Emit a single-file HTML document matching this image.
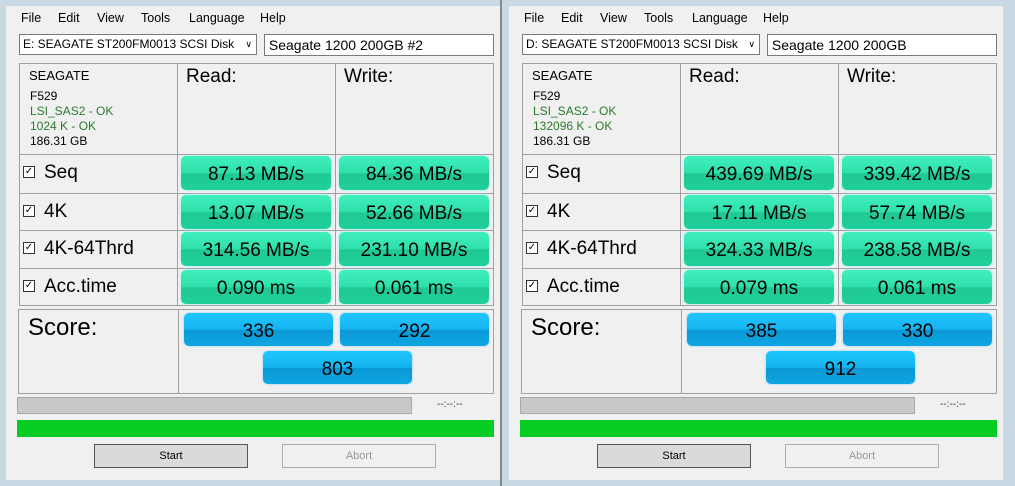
<!DOCTYPE html><html><head><style>
body{margin:0;width:1015px;height:486px;background:#c9d9e3;position:relative;overflow:hidden;font-family:"Liberation Sans",sans-serif}
.p{position:absolute;top:0;width:500px;height:486px}
.in{position:absolute;left:6px;top:6px;width:494px;height:474px;background:#f0f0f0}
.a{position:absolute}
.menu{top:11px;font-size:12.5px}
.cell{position:absolute;border:1px solid #a0a0a0;box-sizing:border-box}
.g{position:absolute;height:34px;border-radius:5px;background:linear-gradient(#3ff0bd 0%,#2fe0ad 50%,#20c892 52%,#1fd09a 100%);box-shadow:0 0 2px #8ee;text-align:center;font-size:19px;line-height:38px;color:#000}
.b{position:absolute;height:33px;border-radius:5px;background:linear-gradient(#20c6ff 0%,#14b4ef 50%,#0a98d6 52%,#0ea6e2 100%);box-shadow:0 0 2px #8cf;text-align:center;font-size:19px;line-height:38px}
.lbl{position:absolute;font-size:19px;left:44px}
.chk{position:absolute;left:23px;width:10px;height:10px;border:1px solid #333;background:#fff;font-size:10px;line-height:10px;text-align:center}
.btn{position:absolute;height:22px;top:444px;width:152px;border:1px solid #adadad;text-align:center;font-size:11px;line-height:22px}
.combo{position:absolute;left:19px;top:34px;width:236px;height:19px;border:1px solid #7a7a7a;background:#fff;font-size:12px;line-height:19px}
.combo span.t{position:absolute;left:3px;top:0;width:215px;overflow:hidden;white-space:nowrap}
.combo span.ar{position:absolute;right:4px;top:0;font-size:9px}
</style></head><body>
<div class="p" style="left:0"><div class="in"></div>
<div class="a menu" style="left:21px">File</div><div class="a menu" style="left:58px">Edit</div><div class="a menu" style="left:97px">View</div><div class="a menu" style="left:141px">Tools</div><div class="a menu" style="left:189px">Language</div><div class="a menu" style="left:260px">Help</div>
<div class="combo"><span class="t">E: SEAGATE ST200FM0013 SCSI Disk Device</span><span class="ar">&#x2228;</span></div>
<div class="a" style="left:264px;top:34px;width:228px;height:20px;border:1px solid #7a7a7a;background:#fff;font-size:14px;line-height:21px">&nbsp;Seagate 1200 200GB #2</div>
<div class="cell" style="left:19px;top:63px;width:159px;height:92px"></div><div class="cell" style="left:177px;top:63px;width:159px;height:92px"></div><div class="cell" style="left:335px;top:63px;width:159px;height:92px"></div>
<div class="a" style="left:29px;top:68px;font-size:13px">SEAGATE</div>
<div class="a" style="left:30px;top:89px;font-size:12px;line-height:15px">F529<br><span style="color:#2a7a2a">LSI_SAS2 - OK<br>1024 K - OK</span><br>186.31 GB</div>
<div class="a" style="left:186px;top:66px;font-size:19px">Read:</div><div class="a" style="left:344px;top:66px;font-size:19px">Write:</div>
<div class="cell" style="left:19px;top:154px;width:159px;height:40px"></div><div class="cell" style="left:177px;top:154px;width:159px;height:40px"></div><div class="cell" style="left:335px;top:154px;width:159px;height:40px"></div>
<div class="cell" style="left:19px;top:193px;width:159px;height:38px"></div><div class="cell" style="left:177px;top:193px;width:159px;height:38px"></div><div class="cell" style="left:335px;top:193px;width:159px;height:38px"></div>
<div class="cell" style="left:19px;top:230px;width:159px;height:39px"></div><div class="cell" style="left:177px;top:230px;width:159px;height:39px"></div><div class="cell" style="left:335px;top:230px;width:159px;height:39px"></div>
<div class="cell" style="left:19px;top:268px;width:159px;height:38px"></div><div class="cell" style="left:177px;top:268px;width:159px;height:38px"></div><div class="cell" style="left:335px;top:268px;width:159px;height:38px"></div>
<div class="cell" style="left:18px;top:309px;width:161px;height:85px"></div><div class="cell" style="left:178px;top:309px;width:316px;height:85px"></div>
<div class="chk" style="top:166px">&#10003;</div><div class="lbl" style="top:162px">Seq</div>
<div class="chk" style="top:205px">&#10003;</div><div class="lbl" style="top:201px">4K</div>
<div class="chk" style="top:242px">&#10003;</div><div class="lbl" style="top:238px">4K-64Thrd</div>
<div class="chk" style="top:280px">&#10003;</div><div class="lbl" style="top:276px">Acc.time</div>
<div class="a" style="left:28px;top:314px;font-size:24px">Score:</div>
<div class="g" style="left:181px;top:156px;width:150px">87.13 MB/s</div><div class="g" style="left:339px;top:156px;width:150px">84.36 MB/s</div>
<div class="g" style="left:181px;top:195px;width:150px">13.07 MB/s</div><div class="g" style="left:339px;top:195px;width:150px">52.66 MB/s</div>
<div class="g" style="left:181px;top:232px;width:150px">314.56 MB/s</div><div class="g" style="left:339px;top:232px;width:150px">231.10 MB/s</div>
<div class="g" style="left:181px;top:270px;width:150px">0.090 ms</div><div class="g" style="left:339px;top:270px;width:150px">0.061 ms</div>
<div class="b" style="left:184px;top:313px;width:149px">336</div><div class="b" style="left:340px;top:313px;width:149px">292</div>
<div class="b" style="left:263px;top:351px;width:149px">803</div>
<div class="a" style="left:17px;top:397px;width:393px;height:15px;background:#c8c8c8;border:1px solid #a8a8a8"></div>
<div class="a" style="left:437px;top:399px;font-size:10px;color:#333">--:--:--</div>
<div class="a" style="left:17px;top:420px;width:477px;height:17px;background:#06cd24"></div>
<div class="btn" style="left:94px;background:#dadada;border-color:#555">Start</div>
<div class="btn" style="left:282px;background:#f0f0f0;color:#999">Abort</div>
</div>
<div style="position:absolute;left:500px;top:0;width:2px;height:486px;background:#7f8a93"></div>
<div class="p" style="left:503px"><div class="in"></div>
<div class="a menu" style="left:21px">File</div><div class="a menu" style="left:58px">Edit</div><div class="a menu" style="left:97px">View</div><div class="a menu" style="left:141px">Tools</div><div class="a menu" style="left:189px">Language</div><div class="a menu" style="left:260px">Help</div>
<div class="combo"><span class="t">D: SEAGATE ST200FM0013 SCSI Disk Device</span><span class="ar">&#x2228;</span></div>
<div class="a" style="left:264px;top:34px;width:228px;height:20px;border:1px solid #7a7a7a;background:#fff;font-size:14px;line-height:21px">&nbsp;Seagate 1200 200GB</div>
<div class="cell" style="left:19px;top:63px;width:159px;height:92px"></div><div class="cell" style="left:177px;top:63px;width:159px;height:92px"></div><div class="cell" style="left:335px;top:63px;width:159px;height:92px"></div>
<div class="a" style="left:29px;top:68px;font-size:13px">SEAGATE</div>
<div class="a" style="left:30px;top:89px;font-size:12px;line-height:15px">F529<br><span style="color:#2a7a2a">LSI_SAS2 - OK<br>132096 K - OK</span><br>186.31 GB</div>
<div class="a" style="left:186px;top:66px;font-size:19px">Read:</div><div class="a" style="left:344px;top:66px;font-size:19px">Write:</div>
<div class="cell" style="left:19px;top:154px;width:159px;height:40px"></div><div class="cell" style="left:177px;top:154px;width:159px;height:40px"></div><div class="cell" style="left:335px;top:154px;width:159px;height:40px"></div>
<div class="cell" style="left:19px;top:193px;width:159px;height:38px"></div><div class="cell" style="left:177px;top:193px;width:159px;height:38px"></div><div class="cell" style="left:335px;top:193px;width:159px;height:38px"></div>
<div class="cell" style="left:19px;top:230px;width:159px;height:39px"></div><div class="cell" style="left:177px;top:230px;width:159px;height:39px"></div><div class="cell" style="left:335px;top:230px;width:159px;height:39px"></div>
<div class="cell" style="left:19px;top:268px;width:159px;height:38px"></div><div class="cell" style="left:177px;top:268px;width:159px;height:38px"></div><div class="cell" style="left:335px;top:268px;width:159px;height:38px"></div>
<div class="cell" style="left:18px;top:309px;width:161px;height:85px"></div><div class="cell" style="left:178px;top:309px;width:316px;height:85px"></div>
<div class="chk" style="top:166px">&#10003;</div><div class="lbl" style="top:162px">Seq</div>
<div class="chk" style="top:205px">&#10003;</div><div class="lbl" style="top:201px">4K</div>
<div class="chk" style="top:242px">&#10003;</div><div class="lbl" style="top:238px">4K-64Thrd</div>
<div class="chk" style="top:280px">&#10003;</div><div class="lbl" style="top:276px">Acc.time</div>
<div class="a" style="left:28px;top:314px;font-size:24px">Score:</div>
<div class="g" style="left:181px;top:156px;width:150px">439.69 MB/s</div><div class="g" style="left:339px;top:156px;width:150px">339.42 MB/s</div>
<div class="g" style="left:181px;top:195px;width:150px">17.11 MB/s</div><div class="g" style="left:339px;top:195px;width:150px">57.74 MB/s</div>
<div class="g" style="left:181px;top:232px;width:150px">324.33 MB/s</div><div class="g" style="left:339px;top:232px;width:150px">238.58 MB/s</div>
<div class="g" style="left:181px;top:270px;width:150px">0.079 ms</div><div class="g" style="left:339px;top:270px;width:150px">0.061 ms</div>
<div class="b" style="left:184px;top:313px;width:149px">385</div><div class="b" style="left:340px;top:313px;width:149px">330</div>
<div class="b" style="left:263px;top:351px;width:149px">912</div>
<div class="a" style="left:17px;top:397px;width:393px;height:15px;background:#c8c8c8;border:1px solid #a8a8a8"></div>
<div class="a" style="left:437px;top:399px;font-size:10px;color:#333">--:--:--</div>
<div class="a" style="left:17px;top:420px;width:477px;height:17px;background:#06cd24"></div>
<div class="btn" style="left:94px;background:#dadada;border-color:#555">Start</div>
<div class="btn" style="left:282px;background:#f0f0f0;color:#999">Abort</div>
</div>
</body></html>
